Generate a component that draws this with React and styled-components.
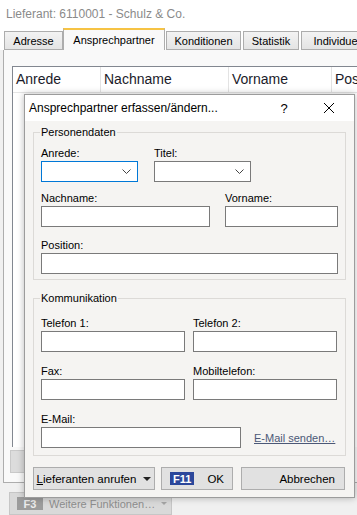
import React from 'react';
import styled, { createGlobalStyle } from 'styled-components';

const GlobalStyle = createGlobalStyle`
  body {
    margin: 0;
    font-family: "Liberation Sans", Arial, sans-serif;
    font-size: 11px;
    color: #000;
  }
  * { box-sizing: border-box; }
`

const Window = styled.div`
  position: relative;
  width: 357px;
  height: 515px;
  overflow: hidden;
  background: #f0f0f0;
  display: flex;
  flex-direction: column;
`

const TitleBar = styled.div`
  height: 28px;
  line-height: 28px;
  padding-left: 6px;
  background: #fff;
  color: #8a8a8a;
  font-size: 12px;
  white-space: nowrap;
`

const TabStrip = styled.div`
  display: flex;
  align-items: flex-end;
  height: 22px;
  padding-left: 4px;
  background: #fff;
  position: relative;
  z-index: 1;
  margin-bottom: -1px;
`

const Tab = styled.div`
  flex: none;
  width: ${p => p.w}px;
  height: ${p => (p.active ? 22 : 19)}px;
  margin-right: ${p => p.gap || 0}px;
  display: flex;
  align-items: center;
  justify-content: center;
  white-space: nowrap;
  overflow: hidden;
  border: 1px solid #adadad;
  border-bottom: ${p => (p.active ? 'none' : '1px solid #adadad')};
  border-top: ${p => (p.active ? '2px solid #f6c344' : '1px solid #adadad')};
  background: ${p => (p.active ? '#f9f9f9' : 'linear-gradient(#f3f3f3, #e4e4e4)')};
  font-size: 11px;
  padding-top: ${p => (p.active ? 0 : 1)}px;
`

const TabPanel = styled.div`
  flex: none;
  height: 434px;
  margin-left: 3px;
  border: 1px solid #adadad;
  border-right: none;
  background: #f9f9f9;
  padding: 16px 0 8px 8px;
  display: flex;
  flex-direction: column;
`

const Grid = styled.div`
  height: 381px;
  background: #fff;
  border-left: 1px solid #828790;
  border-top: 1px solid #828790;
`

const HeaderRow = styled.div`
  display: flex;
  height: 26px;
  border-bottom: 1px solid #e5e5e5;
`

const HeaderCell = styled.div`
  flex: none;
  width: ${p => p.w}px;
  padding-left: 3px;
  line-height: 25px;
  font-size: 14px;
  color: #1b1b2a;
  border-right: 1px solid #e3e3e3;
  white-space: nowrap;
  overflow: hidden;
`

const PanelButton = styled.div`
  width: 100px;
  height: 23px;
  margin: 3px 0 0 -2px;
  background: #dcdcdc;
  border: 1px solid #c9c9c9;
`

const BottomBar = styled.div`
  flex: 1;
  padding: 9px 0 0 9px;
`

const MoreButton = styled.div`
  width: 163px;
  height: 23px;
  display: flex;
  align-items: center;
  gap: 6px;
  padding-left: 7px;
  background: #d9d9d9;
  border: 1px solid #c6c6c6;
  color: #8e8e8e;
  font-size: 11px;
`

const KeyBadge = styled.span`
  display: inline-flex;
  align-items: center;
  justify-content: center;
  width: ${p => p.w || 26}px;
  height: 13px;
  background: ${p => p.bg};
  color: ${p => p.fg || '#fff'};
  font-weight: bold;
  font-size: 11px;
`

const Caret = styled.span`
  width: 0;
  height: 0;
  border-left: ${p => p.s}px solid transparent;
  border-right: ${p => p.s}px solid transparent;
  border-top: ${p => p.s}px solid ${p => p.c};
`

/* dialog lies over the supplier window */
const Dialog = styled.div`
  position: absolute;
  left: 24px;
  top: 94px;
  width: 331px;
  height: 404px;
  background: #f5f4f2;
  border: 1px solid #9c9c9c;
  box-shadow: 0 0 7px rgba(0, 0, 0, 0.28);
  display: flex;
  flex-direction: column;
`

const DialogTitle = styled.div`
  height: 26px;
  display: flex;
  align-items: center;
  padding-left: 4px;
  background: #fff;
  font-size: 12px;
  white-space: nowrap;
`

const TitleText = styled.span`
  flex: 1;
`

const HelpMark = styled.span`
  width: 12px;
  font-size: 13px;
  margin-right: 33px;
  text-align: center;
`

const CloseBox = styled.span`
  display: flex;
  width: 14px;
  margin-right: 17px;
`

const DialogBody = styled.div`
  flex: 1;
  padding: 4px 8px 0 8px;
  display: flex;
  flex-direction: column;
`

const Group = styled.fieldset`
  margin: ${p => p.mt || 0}px 0 0 0;
  border: 1px solid #dcdad7;
  padding: 0 6px ${p => p.pb}px 7px;
  min-width: 0;
`

const Legend = styled.legend`
  padding: 0 1px;
  margin-left: -1px;
  line-height: 14px;
  font-size: 11px;
`

const Rows = styled.div`
  display: flex;
  flex-direction: column;
  gap: ${p => p.gap}px;
  margin-top: ${p => p.mt}px;
`

const Row = styled.div`
  display: flex;
  align-items: flex-end;
  gap: ${p => p.gap || 0}px;
  margin-top: ${p => p.mt || 0}px;
`

const Field = styled.div`
  width: ${p => p.w}px;
  flex: none;
`

const Label = styled.div`
  line-height: 15px;
  height: 15px;
  white-space: nowrap;
`

const Input = styled.div`
  height: 21px;
  background: #fff;
  border: 1px solid ${p => (p.focus ? '#0078d7' : '#7a7a7a')};
  display: flex;
  align-items: center;
  justify-content: flex-end;
  padding-right: 6px;
`

const Link = styled.span`
  margin: 0 0 4px 13px;
  color: #4b5877;
  text-decoration: underline;
  white-space: nowrap;
`

const ButtonRow = styled.div`
  display: flex;
  margin-top: 11px;
`

const Button = styled.div`
  width: ${p => p.w}px;
  height: 23px;
  margin-right: ${p => p.mr || 0}px;
  display: flex;
  align-items: center;
  justify-content: ${p => p.align || 'center'};
  gap: ${p => p.gap || 0}px;
  padding: 0 ${p => p.px || 0}px;
  background: #e1e1e1;
  border: 1px solid #adadad;
  font-size: 11.5px;
  white-space: nowrap;
`

const Chevron = () => (
  <svg width="9" height="5" viewBox="0 0 9 5">
    <path d="M0.5 0.5 L4.5 4.5 L8.5 0.5" fill="none" stroke="#444" strokeWidth="1" />
  </svg>
)

const tabs = [
  { label: 'Adresse', w: 59, gap: 0 },
  { label: 'Ansprechpartner', w: 102, gap: 1, active: true },
  { label: 'Konditionen', w: 75, gap: 2 },
  { label: 'Statistik', w: 56, gap: 2 },
  { label: 'Individuelle', w: 80, gap: 0 },
]

const columns = [
  { label: 'Anrede', w: 88 },
  { label: 'Nachname', w: 128 },
  { label: 'Vorname', w: 103 },
  { label: 'Position', w: 80 },
]

export default function App() {
  return (
    <>
      <GlobalStyle />
      <Window>
        <TitleBar>Lieferant: 6110001 - Schulz &amp; Co.</TitleBar>
        <TabStrip>
          {tabs.map(t => (
            <Tab key={t.label} w={t.w} gap={t.gap} active={t.active}>{t.label}</Tab>
          ))}
        </TabStrip>
        <TabPanel>
          <Grid>
            <HeaderRow>
              {columns.map(c => (
                <HeaderCell key={c.label} w={c.w}>{c.label}</HeaderCell>
              ))}
            </HeaderRow>
          </Grid>
          <PanelButton />
        </TabPanel>
        <BottomBar>
          <MoreButton>
            <KeyBadge bg="#9c9c9c" fg="#ececec">F3</KeyBadge>
            Weitere Funktionen…
            <Caret s={3} c="#a5a5a5" />
          </MoreButton>
        </BottomBar>

        <Dialog>
          <DialogTitle>
            <TitleText>Ansprechpartner erfassen/ändern...</TitleText>
            <HelpMark>?</HelpMark>
            <CloseBox>
              <svg width="12" height="12" viewBox="0 0 12 12">
                <path d="M1 1 L11 11 M11 1 L1 11" stroke="#000" strokeWidth="1" />
              </svg>
            </CloseBox>
          </DialogTitle>
          <DialogBody>
            <Group pb={5}>
              <Legend>Personendaten</Legend>
              <Rows gap={9} mt={7}>
                <Row gap={16}>
                  <Field w={97}>
                    <Label>Anrede:</Label>
                    <Input focus><Chevron /></Input>
                  </Field>
                  <Field w={97}>
                    <Label>Titel:</Label>
                    <Input><Chevron /></Input>
                  </Field>
                </Row>
                <Row gap={15}>
                  <Field w={169}>
                    <Label>Nachname:</Label>
                    <Input />
                  </Field>
                  <Field w={113}>
                    <Label>Vorname:</Label>
                    <Input />
                  </Field>
                </Row>
                <Row mt={2}>
                  <Field w={297}>
                    <Label>Position:</Label>
                    <Input />
                  </Field>
                </Row>
              </Rows>
            </Group>

            <Group pb={7} mt={11}>
              <Legend>Kommunikation</Legend>
              <Rows gap={12} mt={11}>
                <Row gap={8}>
                  <Field w={144}>
                    <Label>Telefon 1:</Label>
                    <Input />
                  </Field>
                  <Field w={144}>
                    <Label>Telefon 2:</Label>
                    <Input />
                  </Field>
                </Row>
                <Row gap={8}>
                  <Field w={144}>
                    <Label>Fax:</Label>
                    <Input />
                  </Field>
                  <Field w={144}>
                    <Label>Mobiltelefon:</Label>
                    <Input />
                  </Field>
                </Row>
                <Row>
                  <Field w={200}>
                    <Label>E-Mail:</Label>
                    <Input />
                  </Field>
                  <Link>E-Mail senden…</Link>
                </Row>
              </Rows>
            </Group>

            <ButtonRow>
              <Button w={122} mr={6} gap={7}>
                <span><u>L</u>ieferanten anrufen</span>
                <Caret s={4} c="#222" />
              </Button>
              <Button w={72} mr={8} align="flex-start" px={8} gap={13}>
                <KeyBadge bg="#2b479b">F11</KeyBadge>
                OK
              </Button>
              <Button w={104} align="flex-end" px={9}>Abbrechen</Button>
            </ButtonRow>
          </DialogBody>
        </Dialog>
      </Window>
    </>
  )
}
